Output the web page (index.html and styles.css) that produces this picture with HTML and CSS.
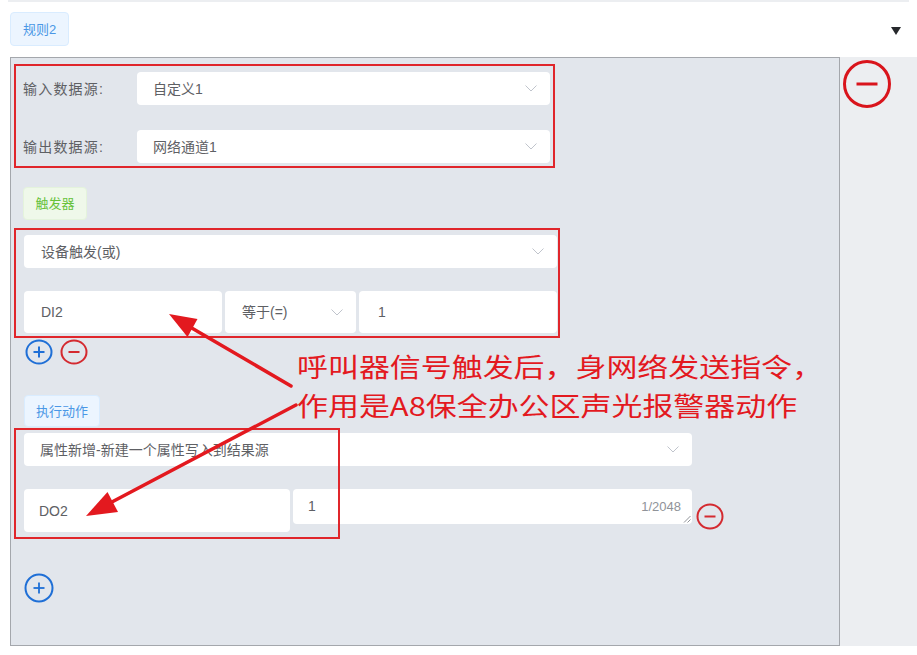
FILE: index.html
```html
<!DOCTYPE html>
<html lang="zh-CN">
<head>
<meta charset="utf-8">
<title>规则2</title>
<link rel="stylesheet" href="styles.css">
</head>
<body>
<div class="topline"></div>
<div class="header">
  <span class="tag tag-blue tag-rule">规则2</span>
  <span class="caret"></span>
</div>
<div class="main">
  <div class="panel">
    <div class="box box-src">
      <div class="form-row">
        <span class="label">输入数据源:</span>
        <div class="select select-grow"><span>自定义1</span><svg class="chev" width="12" height="7" viewBox="0 0 12 7"><polyline points="0.5,0.5 6,6 11.5,0.5" fill="none" stroke="#c0c4cc" stroke-width="1"/></svg></div>
      </div>
      <div class="form-row">
        <span class="label">输出数据源:</span>
        <div class="select select-grow"><span>网络通道1</span><svg class="chev" width="12" height="7" viewBox="0 0 12 7"><polyline points="0.5,0.5 6,6 11.5,0.5" fill="none" stroke="#c0c4cc" stroke-width="1"/></svg></div>
      </div>
    </div>

    <span class="tag tag-green tag-trigger">触发器</span>

    <div class="box box-trigger">
      <div class="select select-trig"><span>设备触发(或)</span><svg class="chev" width="12" height="7" viewBox="0 0 12 7"><polyline points="0.5,0.5 6,6 11.5,0.5" fill="none" stroke="#c0c4cc" stroke-width="1"/></svg></div>
      <div class="cond-row">
        <div class="input input-di">DI2</div>
        <div class="select select-op"><span>等于(=)</span><svg class="chev" width="12" height="7" viewBox="0 0 12 7"><polyline points="0.5,0.5 6,6 11.5,0.5" fill="none" stroke="#c0c4cc" stroke-width="1"/></svg></div>
        <div class="input input-val">1</div>
      </div>
    </div>

    <div class="ops">
      <svg class="op" width="28" height="26" viewBox="0 0 28 26"><ellipse cx="14" cy="13" rx="12.5" ry="11.5" fill="none" stroke="#1f6fd6" stroke-width="2"/><line x1="8.5" y1="13" x2="19.5" y2="13" stroke="#1f6fd6" stroke-width="2"/><line x1="14" y1="7.5" x2="14" y2="18.5" stroke="#1f6fd6" stroke-width="2"/></svg>
      <svg class="op" width="28" height="26" viewBox="0 0 28 26"><ellipse cx="14" cy="13" rx="12.5" ry="11.5" fill="none" stroke="#d42a30" stroke-width="2"/><line x1="8.5" y1="13" x2="19.5" y2="13" stroke="#d42a30" stroke-width="2"/></svg>
    </div>

    <span class="tag tag-blue tag-action">执行动作</span>

    <div class="select select-action"><span>属性新增-新建一个属性写入到结果源</span><svg class="chev" width="12" height="7" viewBox="0 0 12 7"><polyline points="0.5,0.5 6,6 11.5,0.5" fill="none" stroke="#c0c4cc" stroke-width="1"/></svg></div>

    <div class="act-row">
      <div class="input input-do">DO2</div>
      <div class="textarea">
        <span class="ta-val">1</span>
        <span class="ta-count">1/2048</span>
        <svg class="grip" width="8" height="8" viewBox="0 0 8 8"><line x1="1" y1="7.5" x2="7.5" y2="1" stroke="#909399" stroke-width="1"/><line x1="4.5" y1="7.5" x2="7.5" y2="4.5" stroke="#909399" stroke-width="1"/></svg>
      </div>
      <svg class="op op-del" width="28" height="27" viewBox="0 0 28 27"><ellipse cx="14" cy="13.5" rx="12.5" ry="12" fill="none" stroke="#d42a30" stroke-width="2"/><line x1="8.5" y1="13.5" x2="19.5" y2="13.5" stroke="#d42a30" stroke-width="2"/></svg>
    </div>

    <div class="add">
      <svg width="30" height="30" viewBox="0 0 30 30"><circle cx="15" cy="15" r="13.5" fill="none" stroke="#1f6fd6" stroke-width="2"/><line x1="9.5" y1="15" x2="20.5" y2="15" stroke="#1f6fd6" stroke-width="1.8"/><line x1="15" y1="9.5" x2="15" y2="20.5" stroke="#1f6fd6" stroke-width="1.8"/></svg>
    </div>

    <div class="anno-rect"></div>
    <svg class="arrows" width="828" height="587" viewBox="11 58 828 587">
      <line x1="291" y1="386" x2="190" y2="327" stroke="#e3191f" stroke-width="3.5" stroke-linecap="round"/>
      <polygon points="169,314 187.5,337 197.5,319" fill="#e3191f"/>
      <line x1="296" y1="405" x2="110" y2="503" stroke="#e3191f" stroke-width="3.5" stroke-linecap="round"/>
      <polygon points="86,516 118,512 107.5,492" fill="#e3191f"/>
    </svg>
    <div class="anno-text">
      <div>呼叫器信号触发后，身网络发送指令，</div>
      <div>作用是A8保全办公区声光报警器动作</div>
    </div>
  </div>
  <div class="side">
    <svg width="48" height="48" viewBox="0 0 48 48"><circle cx="24" cy="24" r="22.5" fill="none" stroke="#d9141c" stroke-width="3"/><line x1="13.5" y1="24" x2="34.5" y2="24" stroke="#d9141c" stroke-width="3"/></svg>
  </div>
</div>
</body>
</html>
```

FILE: styles.css
```css
* {
  box-sizing: border-box;
}

body {
  margin: 0;
  background: #ffffff;
  font-family: "Liberation Sans", "Noto Sans CJK SC", sans-serif;
  font-size: 14px;
  color: #5e6064;
}

.topline {
  height: 2px;
  margin: 0 8px;
  background: #eceef1;
}

.header {
  height: 55px;
  display: flex;
  align-items: flex-start;
  padding: 10px 16px 0 10px;
}

.tag {
  display: flex;
  align-items: center;
  justify-content: center;
  border: 1px solid;
  border-radius: 4px;
  font-size: 13px;
  line-height: 1;
}

.tag-blue {
  background: #ecf5ff;
  border-color: #d9ecff;
  color: #4a97e6;
}

.tag-green {
  background: #eff8ea;
  border-color: #e4f3dc;
  color: #67c23a;
}

.tag-rule {
  width: 59px;
  height: 34px;
}

.caret {
  margin-left: auto;
  margin-top: 15px;
  width: 0;
  height: 0;
  border-left: 5.5px solid transparent;
  border-right: 5.5px solid transparent;
  border-top: 8px solid #26282c;
}

.main {
  display: flex;
  height: 590px;
}

.panel {
  position: relative;
  width: 830px;
  height: 589px;
  margin-left: 10px;
  border: 1px solid #a4a7ac;
  background: #e2e6ec;
  padding: 6px 0 0 3px;
}

.side {
  flex: 1;
  height: 589px;
  background: #eceef1;
  padding: 3px 0 0 3px;
}

.box {
  border: 2px solid #e0262b;
}

.box-src {
  width: 541px;
  height: 104px;
  padding: 6px 3px 3px 7px;
  display: flex;
  flex-direction: column;
  gap: 25px;
}

.form-row {
  display: flex;
  align-items: center;
  height: 33px;
}

.label {
  width: 114px;
  letter-spacing: 1.2px;
  line-height: 20px;
}

.select {
  display: flex;
  align-items: center;
  justify-content: space-between;
  height: 33px;
  background: #ffffff;
  border-radius: 4px;
  padding: 0 13px 0 16px;
  line-height: 20px;
}

.select-grow {
  flex: 1;
}

.tag-trigger {
  width: 64px;
  height: 33px;
  margin: 19px 0 0 9px;
}

.box-trigger {
  width: 546px;
  height: 110px;
  margin-top: 8px;
  padding: 5px 1px 3px 8px;
  display: flex;
  flex-direction: column;
  gap: 23px;
}

.select-trig {
  padding-left: 17px;
}

.cond-row {
  display: flex;
  gap: 3px;
  height: 42px;
}

.input {
  display: flex;
  align-items: center;
  background: #ffffff;
  border-radius: 4px;
  padding-left: 17px;
  line-height: 20px;
}

.input-di {
  width: 198px;
}

.select-op {
  width: 131px;
  height: 42px;
  padding: 0 13px 0 17px;
}

.input-val {
  width: 198px;
  padding-left: 19px;
}

.ops {
  display: flex;
  gap: 7px;
  height: 26px;
  margin: 1px 0 0 11px;
}

.tag-action {
  width: 76px;
  height: 32px;
  margin: 30px 0 0 10px;
}

.select-action {
  width: 668px;
  margin: 6px 0 0 10px;
}

.act-row {
  display: flex;
  align-items: flex-start;
  margin: 23px 0 0 10px;
}

.input-do {
  width: 266px;
  height: 43px;
  padding-left: 15px;
}

.textarea {
  position: relative;
  width: 399px;
  height: 35px;
  margin-left: 3px;
  background: #ffffff;
  border-radius: 4px;
  padding: 7px 0 0 15px;
  line-height: 20px;
}

.ta-count {
  position: absolute;
  right: 11px;
  top: 8px;
  font-size: 13px;
  color: #909399;
}

.grip {
  position: absolute;
  right: 1px;
  bottom: 1px;
}

.op-del {
  margin: 14px 0 0 4px;
}

.add {
  margin: 41px 0 0 10px;
  height: 30px;
}

.anno-rect {
  position: absolute;
  left: 3px;
  top: 370px;
  width: 326px;
  height: 111px;
  border: 2px solid #e0262b;
}

.arrows {
  position: absolute;
  left: 0;
  top: 0;
  pointer-events: none;
}

.anno-text {
  position: absolute;
  left: 286px;
  top: 288px;
  font-family: "Noto Sans CJK SC", sans-serif;
  font-size: 26px;
  line-height: 39px;
  color: #e3191f;
  white-space: nowrap;
  transform: scaleX(1.19);
  transform-origin: left top;
}
```
